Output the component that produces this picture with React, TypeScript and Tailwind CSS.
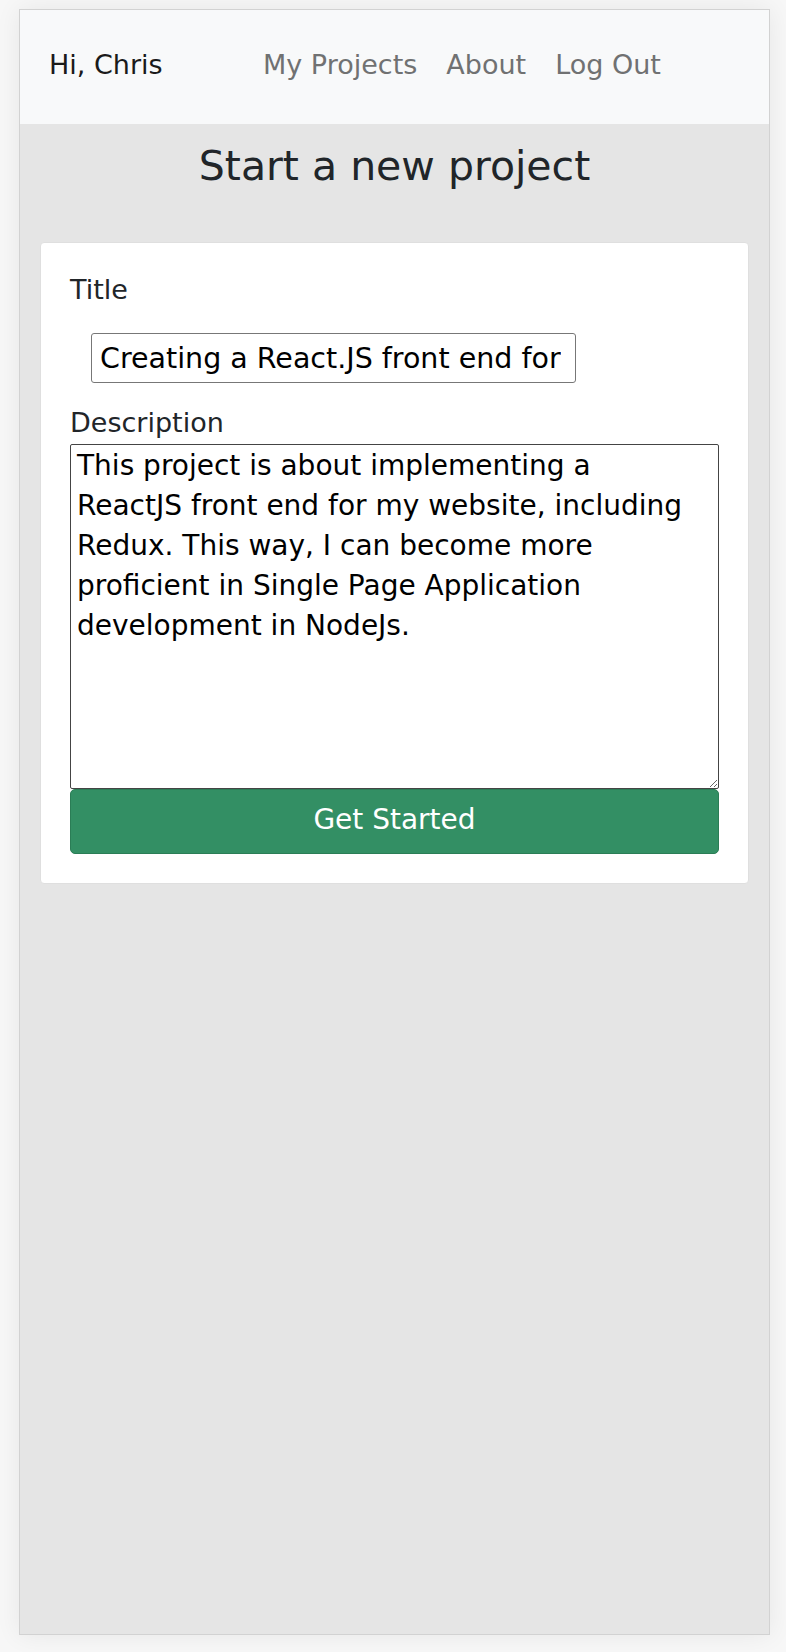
export default function App() {
  const description =
    "This project is about implementing a ReactJS front end for my website, including Redux. This way, I can become more proficient in Single Page Application development in NodeJs.";

  return (
    <div className="min-h-[1652px] w-full bg-[#f7f7f7] pt-[9px] pl-[19px] font-['DejaVu_Sans',sans-serif]">
      <div className="flex h-[1626px] w-[751px] flex-col border border-[#d2d2d2] bg-[#e5e5e5] shadow-[0_0_24px_rgba(0,0,0,0.07)]">
        {/* navbar */}
        <nav className="flex h-[114px] shrink-0 items-center bg-[#f8f9fa] pb-[4px] pl-[29px] text-[27px]">
          <span className="w-[214px] text-[#1a1a1a]">Hi, Chris</span>
          <div className="flex gap-[29px] text-[#707172]">
            <a>My Projects</a>
            <a>About</a>
            <a>Log Out</a>
          </div>
        </nav>

        <main className="flex flex-col px-[20px] pt-[18px]">
          <h1 className="text-center text-[41px] leading-[48px] text-[#212529]">Start a new project</h1>

          <div className="mt-[52px] rounded-[4px] border border-[#dfdfdf] bg-white px-[29px] pt-[27px] pb-[29px]">
            <label className="block text-[27px] leading-[40px] text-[#212529]">Title</label>
            <input
              className="mt-[23px] ml-[21px] block h-[50px] w-[485px] rounded-[3px] border border-[#777] bg-white pr-[14px] pl-[8px] text-[28.5px] text-black outline-none"
              defaultValue="Creating a React.JS front end for my website"
            />

            <label className="mt-[20px] block text-[27px] leading-[40px] text-[#212529]">Description</label>
            <textarea
              className="mt-[1px] block h-[345px] w-full rounded-[2px] border border-[#444] bg-white pt-[1px] pr-[36px] pl-[6px] text-[28px] leading-[40px] text-black outline-none"
              defaultValue={description}
            />

            <button className="flex h-[65px] w-full items-center justify-center rounded-[5px] border border-[#2b7d56] bg-[#338f64] pb-[4px] text-[28px] text-white">
              Get Started
            </button>
          </div>
        </main>
      </div>
    </div>
  );
}
